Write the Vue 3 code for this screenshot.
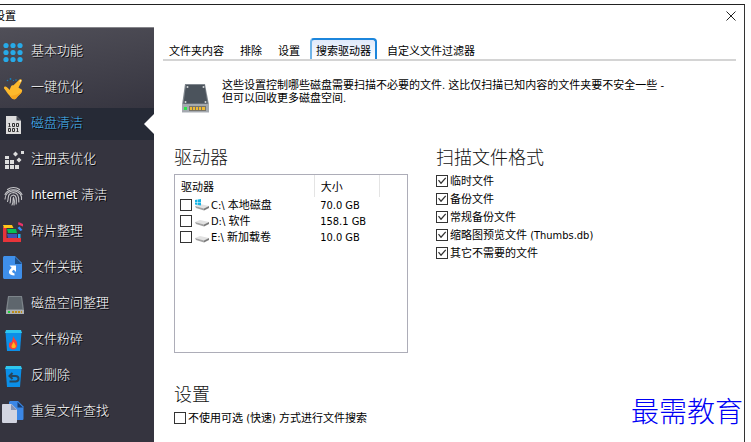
<script setup>
import { ref } from 'vue'

const sections = [
  { id: 'basic', label: '基本功能' },
  { id: 'oneclick', label: '一键优化' },
  { id: 'disk', label: '磁盘清洁' },
  { id: 'registry', label: '注册表优化' },
  { id: 'internet', label: 'Internet 清洁' },
  { id: 'defrag', label: '碎片整理' },
  { id: 'assoc', label: '文件关联' },
  { id: 'space', label: '磁盘空间整理' },
  { id: 'shred', label: '文件粉碎' },
  { id: 'undelete', label: '反删除' },
  { id: 'dupes', label: '重复文件查找' }
]
const current = ref('disk')

const tabs = ['文件夹内容', '排除', '设置', '搜索驱动器', '自定义文件过滤器']
const activeTab = ref('搜索驱动器')

const drives = ref([
  { id: 'c', name: 'C:\\ 本地磁盘', size: '70.0 GB', system: true, checked: false },
  { id: 'd', name: 'D:\\ 软件', size: '158.1 GB', system: false, checked: false },
  { id: 'e', name: 'E:\\ 新加载卷', size: '10.0 GB', system: false, checked: false }
])

const formats = ref([
  { id: 'temp', label: '临时文件', checked: true },
  { id: 'backup', label: '备份文件', checked: true },
  { id: 'common', label: '常规备份文件', checked: true },
  { id: 'thumbs', label: '缩略图预览文件 (Thumbs.db)', checked: true },
  { id: 'other', label: '其它不需要的文件', checked: true }
])
const noFastSearch = ref(false)
</script>

<template>
  <div class="window">
    <header class="titlebar">
      <span class="title">设置</span>
      <button class="close" type="button" aria-label="关闭">
        <svg width="10" height="10" viewBox="0 0 10 10"><path d="M.5 .5L9.5 9.5M9.5 .5L.5 9.5" stroke="#222" fill="none" /></svg>
      </button>
    </header>

    <div class="body">
      <nav class="sidebar">
        <button
          v-for="s in sections"
          :key="s.id"
          type="button"
          class="item"
          :class="{ active: s.id === current }"
          @click="current = s.id"
        >
          <svg class="icon" width="24" height="24" viewBox="0 0 24 24" aria-hidden="true">
            <g v-if="s.id === 'basic'" fill="#27aae8">
              <template v-for="y in 3" :key="y">
                <circle v-for="x in 3" :key="x" :cx="x * 7 - 2" :cy="y * 7 - 1.5" r="2.6" />
              </template>
            </g>
            <g v-else-if="s.id === 'oneclick'">
              <path d="M3.300 11C4.500 9.800 6.500 11.500 8.500 14L10 10.500C10.600 9.300 11.500 9.200 12.500 9.300L18.500 3.600C19.800 2.500 21.500 3.600 20.700 5.200L17.500 11.500C19 13 22 13 21 15.500C20 18 17 19.500 15.500 22C14 24 12 23.500 10.500 22L8.500 19.500C6.500 17.500 5 15 3.500 13C2.800 12.200 2.800 11.600 3.300 11Z" fill="#fdb92c" />
              <path d="M21 15.500C20 18 17 19.500 15.500 22C14 24 12 23.500 10.500 22L8.500 19.500C13 20.500 17 18 21 15.500Z" fill="#f6a51f" />
              <path d="M18.800 4.300L20.300 3.900L19.800 5.600L18.600 6Z" fill="#fff0cc" />
              <g fill="#1783bd"><circle cx="6.500" cy="4.500" r=".8" /><circle cx="9.500" cy="3" r=".9" /><circle cx="15" cy="4" r=".8" /><circle cx="12.500" cy="4.500" r=".6" /></g>
            </g>
            <g v-else-if="s.id === 'disk'" transform="translate(0 1)">
              <path d="M5 3H15.500L20 7.500V21H5Z" fill="#dcdcdc" />
              <path d="M15.500 3L20 7.500H15.500Z" fill="#44474f" />
              <g fill="none" stroke="#333">
                <path d="M8.500 10V14M7.500 10.500H8.500M7.500 13.500H9.500M11.500 10.500H13.500V13.500H11.500ZM15.500 10.500H17.500V13.500H15.500ZM7.500 15.500H9.500V18.500H7.500ZM11.500 15.500H13.500V18.500H11.500ZM16.500 15V19M15.500 15.500H16.500M15.500 18.500H17.500" />
              </g>
            </g>
            <g v-else-if="s.id === 'registry'" fill="#dedede">
              <path d="M4 8h4v3H4ZM4 12h4v4H4ZM9 12h4v4H9ZM4 17h4v4H4ZM9 17h4v4H9ZM14 17h4v4H14ZM20 3h3v3H20ZM14.500 3.500L17 6L14.500 8.500L12 6ZM18 9.500L20.500 12L18 14.500L15.500 12Z" />
            </g>
            <g v-else-if="s.id === 'internet'" fill="none" stroke="#c5c5c8" stroke-width="1.100" stroke-linecap="round">
              <path d="M6.500 5.500C10 2.800 15 2.800 18.500 5.500M4 10.500C7 4.500 17.500 4 21 10.500M4 15C4.500 5 18.500 4.500 20.500 13V15.500M6.500 17.500C8 15 5.500 9 12.500 8.500C18 8.800 18 14 17.800 18M9 19C10.500 16 7.500 11.500 12.500 11C16 11.500 15.500 16 15.200 20M11 21C13 18 11.500 15 12.500 13.500C13.700 16 13.500 19 13 21" />
            </g>
            <g v-else-if="s.id === 'defrag'">
              <path d="M2 7H5.500V18H20V22H2Z" fill="#e8343a" />
              <path d="M2 5H11L12.500 8H3Z" fill="#ffc61a" />
              <path d="M6 9H15L16 13H7Z" fill="#08bf55" />
              <path d="M6 14H16V18H7Z" fill="#3f51b5" />
              <path d="M17 14H19.500V18H17Z" fill="#1fb0f2" />
              <path d="M16.500 8L18.500 6.500L21.500 10L19.500 11Z" fill="#2f8eff" />
              <path d="M17.500 2L22 4V6.500L17 4.500Z" fill="#e83368" />
            </g>
            <g v-else-if="s.id === 'assoc'">
              <path d="M4 0H14L21 7V21C21 22.500 20.500 23 19 23H4C2.500 23 2 22.500 2 21V2C2 .5 2.500 0 4 0Z" fill="#3f8fea" />
              <path d="M14 1L21 8H14Z" fill="#1c4f88" />
              <path d="M8.500 9.500H15V16L12.800 13.800C10.500 15 10.500 16.500 13.500 17.500V19.500C7.500 19.500 6 15.500 10.700 11.700Z" fill="#fff" />
            </g>
            <g v-else-if="s.id === 'space'">
              <path d="M7 4H21L23 18H5Z" fill="#7d848a" />
              <path d="M8 5H20L21.500 17H6.500Z" fill="#5e666d" />
              <path d="M5 18H23V22H5Z" fill="#adb0b3" />
              <path d="M7 19H9V21H7Z" fill="#19d53b" />
              <path d="M11 19H13V21H11ZM14 19H16V21H14ZM17 19H19V21H17ZM20 19H21V21H20Z" fill="#bd8c18" />
            </g>
            <g v-else-if="s.id === 'shred'">
              <path d="M4.500 4H20.500L19 23H6Z" fill="#0b8fe8" />
              <path d="M5 2H20L21 5H4Z" fill="#2fc6ee" />
              <path d="M12 8C13 11 16.500 12.500 16.300 17C16 20 14 21.500 12.500 21.500C9 21.500 7.500 19 8 16C8.500 14 9.500 14 10 15C11 13 12.200 11 12 8Z" fill="#f4403e" />
              <path d="M12.500 13.500C13 15.500 15 16.500 14.800 18.500C14.500 20.500 10.500 20.500 10.500 18.500C10.300 16.500 12.500 15.500 12.500 13.500Z" fill="#ffb51b" />
            </g>
            <g v-else-if="s.id === 'undelete'">
              <path d="M4.500 4H20.500L19 23H6Z" fill="#0b8fe8" />
              <path d="M5 2H20L21 5H4Z" fill="#2fc6ee" />
              <path d="M9 12H14.500C18.500 12 18.500 17.500 14.500 17.500H8.500M11.500 9L8.500 12L11.500 15" fill="none" stroke="#28465c" stroke-width="2" />
            </g>
            <g v-else transform="translate(0 1)">
              <path d="M9 0H17L22.500 5.500V17.500C22.500 18.500 22 19 21 19H8V1Z" fill="#3b87e6" />
              <path d="M16.500 1L22 6.500H16.500Z" fill="#173d70" />
              <path d="M2 3H10.500L16 8.500V20.500C16 21.500 15.500 22 14.500 22H2.500C1.500 22 1 21.500 1 20.500V4.500C1 3.500 1.200 3 2 3Z" fill="#d2d4e0" />
              <path d="M10 3L16 9H10Z" fill="#8594b5" />
            </g>
          </svg>
          <span class="label">{{ s.label }}</span>
        </button>
      </nav>

      <main class="main">
        <div class="tabs" role="tablist">
          <button
            v-for="t in tabs"
            :key="t"
            type="button"
            role="tab"
            class="tab"
            :class="{ selected: t === activeTab }"
            :aria-selected="t === activeTab"
            @click="activeTab = t"
          >{{ t }}</button>
        </div>

        <div class="content">
          <div class="intro">
            <svg class="drive" width="29" height="31" viewBox="0 0 29 31" aria-hidden="true">
              <path d="M4 1H24L28 22H1Z" fill="#80878e" />
              <path d="M5 2H23.500L26.500 20.500H2.500Z" fill="#4b535c" />
              <path d="M1 21H28V30H1Z" fill="#a4a9af" />
              <path d="M1 29H28V30H1Z" fill="#d4d6da" />
              <g fill="#d5d8da"><circle cx="6.500" cy="4" r="1" /><circle cx="22.500" cy="4" r="1" /><circle cx="4.500" cy="19" r="1" /><circle cx="24.500" cy="19" r="1" /></g>
              <path d="M3 24H6V27H3Z" fill="#2ee44c" />
              <path d="M8 23H25V28H8Z" fill="#777469" />
              <path d="M9 24H11V27H9ZM12 24H14V27H12ZM15 24H17V27H15ZM18 24H20V27H18ZM21 24H24V27H21Z" fill="#eeb934" />
            </svg>
            <p>这些设置控制哪些磁盘需要扫描不必要的文件. 这比仅扫描已知内容的文件夹要不安全一些 -<br />但可以回收更多磁盘空间.</p>
          </div>

          <div class="columns">
            <section>
              <h2>驱动器</h2>
              <div class="list">
                <table>
                  <colgroup><col class="c-name" /><col class="c-size" /><col /></colgroup>
                  <thead>
                    <tr><th>驱动器</th><th>大小</th><td></td></tr>
                  </thead>
                  <tbody>
                    <tr v-for="d in drives" :key="d.id">
                      <td class="name">
                        <label class="drive-label">
                          <input v-model="d.checked" type="checkbox" />
                          <svg width="14" height="12" viewBox="0 0 14 12" aria-hidden="true">
                            <path d="M0 7L5 5L14 7L9 9.500Z" fill="#e2e2e2" />
                            <path d="M0 7L9 9.500V11.500L1 9Z" fill="#a3a3a3" />
                            <path d="M9 9.500L14 7V9L9 11.500Z" fill="#7a7a7a" />
                            <path v-if="d.system" d="M0 1L2.500 .6V3H0ZM3 .5L6 0V3H3ZM0 3.500H2.500V6L0 5.600ZM3 3.500H6V6.500L3 6Z" fill="#16b3e4" />
                          </svg>
                          <span>{{ d.name }}</span>
                        </label>
                      </td>
                      <td>{{ d.size }}</td>
                      <td></td>
                    </tr>
                  </tbody>
                </table>
              </div>
            </section>

            <section>
              <h2>扫描文件格式</h2>
              <div class="checks">
                <label v-for="f in formats" :key="f.id" class="check">
                  <input v-model="f.checked" type="checkbox" />
                  <span>{{ f.label }}</span>
                </label>
              </div>
            </section>
          </div>

          <section class="settings">
            <h2>设置</h2>
            <div class="checks">
              <label class="check">
                <input v-model="noFastSearch" type="checkbox" />
                <span>不使用可选 (快速) 方式进行文件搜索</span>
              </label>
            </div>
          </section>
        </div>
      </main>
    </div>
    <div class="watermark">最需教育</div>
  </div>
</template>

<style>
body {
  margin: 0;
  background: #fff;
}
</style>

<style scoped>
.window {
  position: relative;
  display: flex;
  flex-direction: column;
  box-sizing: border-box;
  min-height: calc(100vh - 4px);
  margin: 4px 6px 0 0;
  border-top: 1px solid #222;
  border-right: 1px solid #333;
  overflow: hidden;
  font: 11px/13px "DejaVu Sans Condensed", "Noto Sans CJK SC", sans-serif;
  color: #000;
}
button {
  font: inherit;
  color: inherit;
  background: none;
  border: 0;
  padding: 0;
  margin: 0;
  white-space: nowrap;
}
.titlebar {
  display: flex;
  justify-content: space-between;
  align-items: center;
  height: 22px;
}
.title {
  margin-left: -6px;
}
.close {
  display: flex;
  padding: 4px 8px;
}
.body {
  display: flex;
  flex: 1;
}
.sidebar {
  display: flex;
  flex-direction: column;
  gap: 4px;
  flex: 0 0 154px;
  box-sizing: border-box;
  padding-top: 8px;
  border-top: 1px solid #85858a;
  background: linear-gradient(170deg, #504f58 0, #35343f 110px);
}
.item {
  position: relative;
  display: flex;
  align-items: center;
  gap: 6px;
  height: 32px;
  padding-left: 1px;
  font-size: 13px;
  line-height: 18px;
  font-weight: 300;
  color: #fff;
  text-shadow: 1px 1px 0 #000;
  text-align: left;
}
.label {
  padding-bottom: 2px;
}
.item.active {
  background: #262a36;
  color: #45b8f8;
}
.item.active::after {
  content: "";
  position: absolute;
  right: 0;
  top: 6px;
  border: 10px solid transparent;
  border-left: 0;
  border-right-color: #fff;
}
.main {
  flex: 1;
  min-width: 0;
  padding: 11px 8px 0 9px;
}
.tabs {
  display: flex;
  gap: 4px;
  border-bottom: 2px solid #d4d4d4;
}
.tab {
  height: 21px;
  padding: 4px 4px 0;
  border: 2px solid transparent;
  border-bottom: 0;
}
.tab.selected {
  border-color: #1c86dc;
  border-left-color: #71b5e8;
  border-radius: 4px 4px 0 0;
  background: linear-gradient(#dfe9fa, #fff);
}
.content {
  padding: 18px 0 12px 11px;
}
.intro {
  display: flex;
  gap: 12px;
  padding-left: 7px;
}
.drive {
  flex: none;
  margin-top: 4px;
}
p {
  margin: 0;
}
h2 {
  margin: 0;
  font-size: 18px;
  line-height: 26px;
  font-weight: 300;
  color: #111;
}
.columns {
  display: grid;
  grid-template-columns: 234fr 300fr;
  gap: 28px;
  margin-top: 31px;
}
.list {
  box-sizing: border-box;
  min-height: 179px;
  margin-top: 3px;
  border: 1px solid #adadb8;
}
table {
  width: 100%;
  table-layout: fixed;
  border-collapse: collapse;
}
.c-name {
  width: 60%;
}
.c-size {
  width: 28%;
}
th,
td {
  padding: 0 6px;
  height: 16px;
  text-align: left;
  font-weight: 400;
  white-space: nowrap;
}
td.name {
  padding: 0 5px;
}
thead th {
  height: 22px;
  padding-top: 2px;
  box-sizing: border-box;
  border-right: 1px solid #e4e4e4;
}
.drive-label {
  display: flex;
  align-items: center;
  height: 16px;
}
.drive-label svg {
  margin: 0 2px 0 3px;
}
input {
  appearance: none;
  flex: none;
  box-sizing: border-box;
  width: 12px;
  height: 12px;
  margin: 0;
  border: 1px solid #333;
  background: #fff;
}
input:checked::after {
  content: "";
  display: block;
  width: 10px;
  height: 10px;
  background: #333;
  clip-path: polygon(10% 45%, 20% 38%, 40% 62%, 82% 14%, 92% 22%, 40% 82%);
}
.checks {
  margin-top: 1px;
}
.check {
  display: flex;
  align-items: center;
  gap: 2px;
  height: 18px;
}
.settings {
  margin-top: 29px;
}
.watermark {
  position: absolute;
  right: 1px;
  bottom: 16px;
  font: 28px/32px "AR PL UKai CN", KaiTi, "Noto Sans CJK SC", serif;
  font-weight: 300;
  color: #0000f5;
}
</style>
